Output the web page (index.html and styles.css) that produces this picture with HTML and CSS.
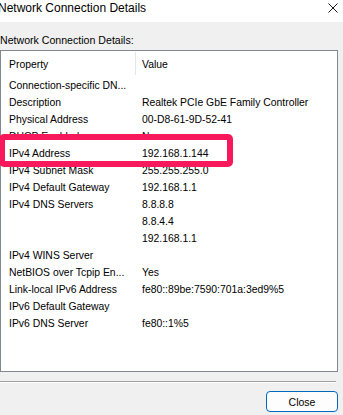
FILE: index.html
```html
<!DOCTYPE html>
<html lang="en">
<head>
    <meta charset="UTF-8">
    <meta name="viewport" content="width=device-width, initial-scale=1.0">
    <title>Network Connection Details</title>
    <link rel="stylesheet" href="styles.css">
</head>
<body>
    <div class="titlebar">
        <span class="title">Network Connection Details</span>
        <svg class="close-x" width="10" height="10" viewBox="0 0 10 10">
            <path d="M0.5 0.5 L9.5 9.5 M9.5 0.5 L0.5 9.5" stroke="#1a1a1a" stroke-width="1" fill="none"/>
        </svg>
    </div>

    <div class="dialog">
        <div class="label">Network Connection Details:</div>

        <div class="listbox">
            <div class="list-head">
                <div class="head-cell first">Property</div>
                <div class="head-cell">Value</div>
            </div>

            <div class="rows">
                <div class="row"><span class="prop">Connection-specific DN...</span><span class="val"></span></div>
                <div class="row"><span class="prop">Description</span><span class="val">Realtek PCIe GbE Family Controller</span></div>
                <div class="row"><span class="prop">Physical Address</span><span class="val">00-D8-61-9D-52-41</span></div>
                <div class="row"><span class="prop">DHCP Enabled</span><span class="val">No</span></div>
                <div class="row"><span class="prop">IPv4 Address</span><span class="val">192.168.1.144</span></div>
                <div class="row"><span class="prop">IPv4 Subnet Mask</span><span class="val">255.255.255.0</span></div>
                <div class="row"><span class="prop">IPv4 Default Gateway</span><span class="val">192.168.1.1</span></div>
                <div class="row"><span class="prop">IPv4 DNS Servers</span><span class="val">8.8.8.8</span></div>
                <div class="row"><span class="prop"></span><span class="val">8.8.4.4</span></div>
                <div class="row"><span class="prop"></span><span class="val">192.168.1.1</span></div>
                <div class="row"><span class="prop">IPv4 WINS Server</span><span class="val"></span></div>
                <div class="row"><span class="prop">NetBIOS over Tcpip En...</span><span class="val">Yes</span></div>
                <div class="row"><span class="prop">Link-local IPv6 Address</span><span class="val">fe80::89be:7590:701a:3ed9%5</span></div>
                <div class="row"><span class="prop">IPv6 Default Gateway</span><span class="val"></span></div>
                <div class="row"><span class="prop">IPv6 DNS Server</span><span class="val">fe80::1%5</span></div>
            </div>

            <!-- annotation drawn over the IPv4 row -->
            <div class="highlight"></div>
        </div>

        <div class="separator"></div>

        <div class="actions">
            <button class="btn">Close</button>
        </div>
    </div>
</body>
</html>
```

FILE: styles.css
```css
body {
    margin: 0;
    width: 343px;
    height: 415px;
    overflow: hidden;
    background: #f0f0f0;
    font-family: "Liberation Sans", Arial, sans-serif;
    color: #000;
}

.titlebar {
    display: flex;
    justify-content: space-between;
    align-items: flex-start;
    height: 22px;
    background: #fff;
    box-sizing: border-box;
    padding-top: 1px;
}

.title {
    font-size: 12px;
    line-height: 15px;
    margin-left: -2px;
    white-space: nowrap;
}

.close-x {
    margin-top: 2px;
    margin-right: 5px;
}

.dialog {
    padding-top: 10px;
}

.label {
    font-size: 10.6px;
    line-height: 17px;
    margin-bottom: 1px;
}

.listbox {
    position: relative;
    width: 338px;
    height: 322px;
    box-sizing: border-box;
    border: 1px solid #828790;
    background: #fff;
    font-size: 10.4px;
}

.list-head {
    display: grid;
    grid-template-columns: 135px 1fr;
    height: 26px;
    padding-top: 1px;
    box-sizing: border-box;
}

.head-cell {
    height: 23px;
    padding: 4px 0 0 6px;
    line-height: 17px;
    box-sizing: border-box;
}

.head-cell.first {
    padding-left: 8px;
    border-right: 1px solid #e5e5e5;
}

.row {
    display: grid;
    grid-template-columns: 135px 1fr;
    height: 17px;
    line-height: 17px;
    white-space: nowrap;
}

.prop {
    padding-left: 8px;
}

.val {
    padding-left: 6px;
}

.highlight {
    position: absolute;
    left: -2px;
    top: 83px;
    width: 234px;
    height: 33px;
    box-sizing: border-box;
    border: 6px solid #f7195b;
    border-radius: 5px;
}

.separator {
    width: 336px;
    height: 1px;
    margin-top: 9px;
    background: #a0a0a0;
    border-bottom: 1px solid #fff;
}

.actions {
    display: flex;
    justify-content: flex-end;
    padding-right: 5px;
    margin-top: 8px;
}

.btn {
    width: 72px;
    height: 21px;
    padding: 0;
    background: #fdfdfd;
    border: 1px solid #0067c0;
    border-radius: 4px;
    font-family: "Liberation Sans", Arial, sans-serif;
    font-size: 10.5px;
    color: #000;
}
```
